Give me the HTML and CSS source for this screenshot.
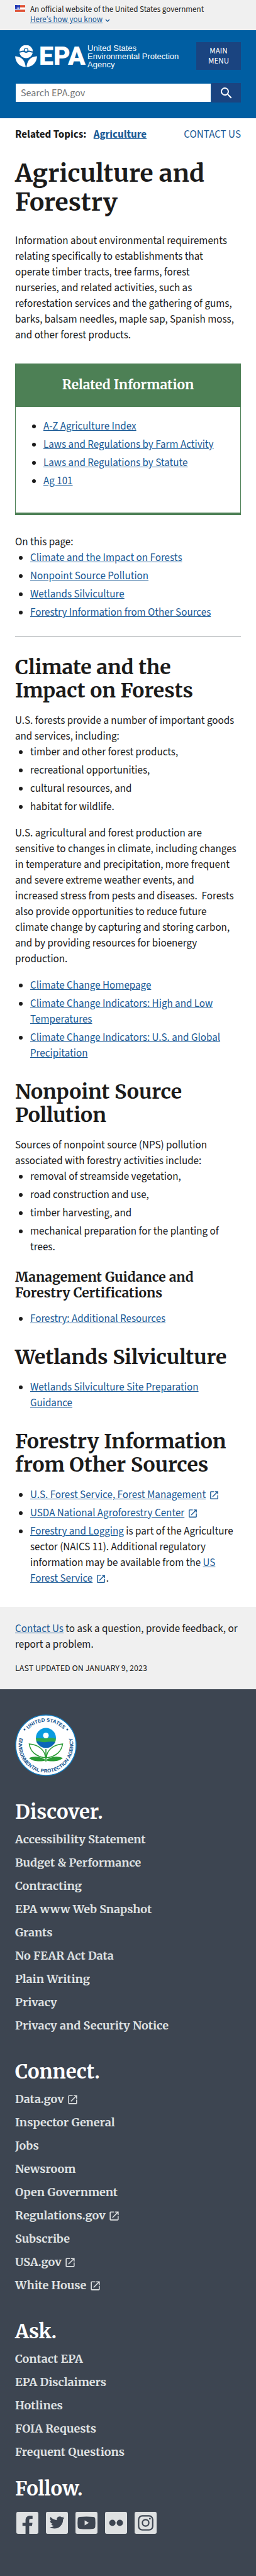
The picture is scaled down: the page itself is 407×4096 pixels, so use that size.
FILE: index.html
```html
<!DOCTYPE html>
<html lang="en">
<head>
<meta charset="utf-8">
<meta name="viewport" content="width=device-width, initial-scale=1">
<title>Agriculture and Forestry | US EPA</title>
<link rel="stylesheet" href="styles.css">
</head>
<body>
<svg class="defs" aria-hidden="true">
  <symbol id="launch" viewBox="0 0 24 24"><path d="M19 19H5V5h7V3H5a2 2 0 0 0-2 2v14a2 2 0 0 0 2 2h14c1.1 0 2-.9 2-2v-7h-2v7zM14 3v2h3.59l-9.83 9.83 1.41 1.41L19 6.41V10h2V3h-7z"/></symbol>
</svg>

<section class="banner">
  <svg class="flag" viewBox="0 0 16 11" aria-hidden="true">
    <path fill="#fff" d="M0 0h16v11H0z"/>
    <path stroke="#db3e1f" d="M0 .5h16M0 2.5h16M0 4.5h16M0 6.5h16M0 8.5h16M0 10.5h16"/>
    <path fill="#1e33b1" d="M0 0h8v7H0z"/>
    <path stroke="#fff" stroke-dasharray="1 1" d="M1 1.5h7M1 3.5h7M1 5.5h7" opacity=".75"/>
  </svg>
  <div>
    <p>An official website of the United States government</p>
    <a href="#how">Here’s how you know</a>
    <svg class="chevron" viewBox="0 0 8 5" aria-hidden="true"><path d="M1 1l3 3 3-3" fill="none" stroke="#1a5a96" stroke-width="1.4"/></svg>
  </div>
</section>

<header class="header">
  <div class="header-row">
    <a class="logo" href="#home">
      <svg class="logo-mark" viewBox="0 0 36 36" aria-hidden="true">
        <path d="M7 10A11 10.500 0 0 1 29 10c-2.500 0-3.500-1.300-6-1.300-.5 0-.9.100-1.300.2A3.800 3.800 0 1 0 14.300 8.900c-.4-.1-.8-.2-1.300-.2-2.500 0-3.500 1.300-6 1.300z"/>
        <circle cx="18" cy="7.800" r="2.300"/>
        <path d="M7.200 12.200c2.600 0 3.400-1.300 5.700-1.300s2.800 1.500 5.100 1.500 2.800-1.500 5.100-1.500 3.100 1.300 5.700 1.300C27.800 17.500 23.500 21 18 21S8.200 17.500 7.200 12.200z"/>
        <path d="M0 18c8 0 16 4.500 17.400 17.500C8 35.500 1 29 0 18zM36 18c-8 0-16 4.500-17.400 17.500C28 35.500 35 29 36 18z"/>
      </svg>
      <span class="logo-name">EPA</span>
      <span class="logo-full">United States<br>Environmental Protection<br>Agency</span>
    </a>
    <button class="menu-button" type="button">MAIN MENU</button>
  </div>
  <form class="search" role="search">
    <input type="search" aria-label="Search EPA.gov" placeholder="Search EPA.gov">
    <button type="button" aria-label="Search"><svg viewBox="0 0 24 24" aria-hidden="true"><path d="M15.500 14h-.79l-.28-.27A6.470 6.470 0 0 0 16 9.500 6.500 6.500 0 1 0 9.500 16c1.610 0 3.090-.59 4.230-1.570l.27.28v.79l5 4.990L20.490 19l-4.990-5zm-6 0C7.010 14 5 11.990 5 9.500S7.010 5 9.500 5 14 7.010 14 9.500 11.990 14 9.500 14z"/></svg></button>
  </form>
</header>

<main class="main">
  <div class="topics">
    <p><b>Related Topics:</b> <a href="#agriculture"><b>Agriculture</b></a></p>
    <a class="contact" href="#contact">CONTACT US</a>
  </div>

  <h1>Agriculture and Forestry</h1>
  <p class="intro">Information about environmental requirements relating specifically to establishments that operate timber tracts, tree farms, forest nurseries, and related activities, such as reforestation services and the gathering of gums, barks, balsam needles, maple sap, Spanish moss, and other forest products.</p>

  <aside class="box">
    <h2>Related Information</h2>
    <ul>
      <li><a href="#az">A-Z Agriculture Index</a></li>
      <li><a href="#activity">Laws and Regulations by Farm Activity</a></li>
      <li><a href="#statute">Laws and Regulations by Statute</a></li>
      <li><a href="#ag101">Ag 101</a></li>
    </ul>
  </aside>

  <nav class="toc">
    <p>On this page:</p>
    <ul>
      <li><a href="#climate">Climate and the Impact on Forests</a></li>
      <li><a href="#nonpoint">Nonpoint Source Pollution</a></li>
      <li><a href="#wetlands">Wetlands Silviculture</a></li>
      <li><a href="#other">Forestry Information from Other Sources</a></li>
    </ul>
  </nav>
  <hr>

  <h2 id="climate">Climate and the Impact on Forests</h2>
  <p>U.S. forests provide a number of important goods and services, including:</p>
  <ul>
    <li>timber and other forest products,</li>
    <li>recreational opportunities,</li>
    <li>cultural resources, and</li>
    <li>habitat for wildlife.</li>
  </ul>
  <p class="spaced">U.S. agricultural and forest production are sensitive to changes in climate, including changes in temperature and precipitation, more frequent and severe extreme weather events, and increased stress from pests and diseases.&nbsp; Forests also provide opportunities to reduce future climate change by capturing and storing carbon, and by providing resources for bioenergy production.</p>
  <ul class="spaced">
    <li><a href="#cc">Climate Change Homepage</a></li>
    <li><a href="#cci">Climate Change Indicators: High and Low Temperatures</a></li>
    <li><a href="#ccp">Climate Change Indicators: U.S. and Global Precipitation</a></li>
  </ul>

  <h2 id="nonpoint">Nonpoint Source Pollution</h2>
  <p>Sources of nonpoint source (NPS) pollution associated with forestry activities include:</p>
  <ul>
    <li>removal of streamside vegetation,</li>
    <li>road construction and use,</li>
    <li>timber harvesting, and</li>
    <li>mechanical preparation for the planting of trees.</li>
  </ul>
  <h3>Management Guidance and Forestry Certifications</h3>
  <ul>
    <li><a href="#resources">Forestry: Additional Resources</a></li>
  </ul>

  <h2 id="wetlands">Wetlands Silviculture</h2>
  <ul>
    <li><a href="#site">Wetlands Silviculture Site Preparation Guidance</a></li>
  </ul>

  <h2 id="other">Forestry Information from Other Sources</h2>
  <ul>
    <li><a href="#usfs">U.S. Forest Service, Forest Management</a> <svg class="ext"><use href="#launch"/></svg></li>
    <li><a href="#usda">USDA National Agroforestry Center</a> <svg class="ext"><use href="#launch"/></svg></li>
    <li><a href="#logging">Forestry and Logging</a> is part of the Agriculture sector (NAICS 11). Additional regulatory information may be available from the <a href="#fs">US Forest Service</a> <svg class="ext"><use href="#launch"/></svg>.</li>
  </ul>
</main>

<section class="feedback">
  <p><a href="#contact">Contact Us</a> to ask a question, provide feedback, or report a problem.</p>
  <p class="updated">LAST UPDATED ON JANUARY 9, 2023</p>
</section>

<footer class="footer">
  <svg class="seal" viewBox="0 0 98 98" role="img" aria-label="United States Environmental Protection Agency seal">
    <defs>
      <path id="arc-top" d="M11.500 49A37.500 37.500 0 0 1 86.500 49"/>
      <path id="arc-bottom" d="M18.240 18.240A43.500 43.500 0 1 0 79.760 18.240"/>
    </defs>
    <circle cx="49" cy="49" r="48" fill="#fff" stroke="#1179bd" stroke-width="1.500"/>
    <g class="seal-text" text-anchor="middle">
      <text><textPath href="#arc-top" startOffset="50%">UNITED STATES</textPath></text>
      <text><textPath href="#arc-bottom" startOffset="50%">ENVIRONMENTAL PROTECTION AGENCY</textPath></text>
    </g>
    <circle cx="15" cy="24" r="1.500" fill="#14558f"/>
    <circle cx="83" cy="24" r="1.500" fill="#14558f"/>
    <clipPath id="globe"><circle cx="49" cy="37.500" r="16"/></clipPath>
    <g clip-path="url(#globe)">
      <path fill="#0a9be0" d="M32 21h34v18H32z"/>
      <path fill="#2fa84b" d="M32 38c6-1 11 1 17 0s11-1 17 1v8H32z"/>
      <path fill="#0a66b8" d="M32 43c6-1 11 2 17 1s11-1 17 0v14H32z"/>
    </g>
    <circle cx="49" cy="33.500" r="4.500" fill="#fff"/>
    <path fill="none" stroke="#2a9b35" stroke-width="1.600" d="M49 55v20M48 69C32 67 24 58 22.500 47 36 48 48 56 48 69zM50 69c16-2 24-11 25.500-22C62 48 50 56 50 69z"/>
    <path fill="#2a9b35" d="M49 73c-8-7-20-7-27-3.500 7 6 20 6 27 3.500zM49 73c8-7 20-7 27-3.500-7 6-20 6-27 3.500z"/>
  </svg>

  <nav>
    <h2>Discover.</h2>
    <ul>
      <li><a href="#f1">Accessibility Statement</a></li>
      <li><a href="#f2">Budget &amp; Performance</a></li>
      <li><a href="#f3">Contracting</a></li>
      <li><a href="#f4">EPA www Web Snapshot</a></li>
      <li><a href="#f5">Grants</a></li>
      <li><a href="#f6">No FEAR Act Data</a></li>
      <li><a href="#f7">Plain Writing</a></li>
      <li><a href="#f8">Privacy</a></li>
      <li><a href="#f9">Privacy and Security Notice</a></li>
    </ul>
  </nav>
  <nav>
    <h2>Connect.</h2>
    <ul>
      <li><a href="#g1">Data.gov</a> <svg class="ext"><use href="#launch"/></svg></li>
      <li><a href="#g2">Inspector General</a></li>
      <li><a href="#g3">Jobs</a></li>
      <li><a href="#g4">Newsroom</a></li>
      <li><a href="#g5">Open Government</a></li>
      <li><a href="#g6">Regulations.gov</a> <svg class="ext"><use href="#launch"/></svg></li>
      <li><a href="#g7">Subscribe</a></li>
      <li><a href="#g8">USA.gov</a> <svg class="ext"><use href="#launch"/></svg></li>
      <li><a href="#g9">White House</a> <svg class="ext"><use href="#launch"/></svg></li>
    </ul>
  </nav>
  <nav>
    <h2>Ask.</h2>
    <ul>
      <li><a href="#h1">Contact EPA</a></li>
      <li><a href="#h2">EPA Disclaimers</a></li>
      <li><a href="#h3">Hotlines</a></li>
      <li><a href="#h4">FOIA Requests</a></li>
      <li><a href="#h5">Frequent Questions</a></li>
    </ul>
  </nav>
  <section class="follow">
    <h2>Follow.</h2>
    <div class="social">
      <a href="#facebook" aria-label="Facebook"><svg viewBox="0 0 36 36"><rect width="36" height="36" rx="2.500"/><path class="cut" d="M15 36V23h-5v-5h5v-4c0-5 3-7.500 7.200-7.500 1.700 0 3.300.100 4.300.2v4.600h-2.700c-2.300 0-2.800 1.200-2.800 2.900V18h5.300l-.7 5H21v13z"/></svg></a>
      <a href="#twitter" aria-label="Twitter"><svg viewBox="0 0 36 36"><rect width="36" height="36" rx="2.500"/><path class="cut" transform="translate(5.500 4.500)" d="M24.600 5.200a9.800 9.800 0 0 1-2.800.8 5 5 0 0 0 2.200-2.700 10 10 0 0 1-3.200 1.200 5 5 0 0 0-8.500 4.500C8.200 8.800 4.500 6.800 2.100 3.800a5 5 0 0 0 1.500 6.700 5 5 0 0 1-2.200-.6v.1a5 5 0 0 0 4 4.900 5 5 0 0 1-2.200.1 5 5 0 0 0 4.600 3.400A10 10 0 0 1 .5 20.500a14.100 14.100 0 0 0 7.700 2.300c9.200 0 14.300-7.700 14.300-14.300v-.7a10 10 0 0 0 2.100-2.600z"/></svg></a>
      <a href="#youtube" aria-label="YouTube"><svg viewBox="0 0 36 36"><rect width="36" height="36" rx="2.500"/><path class="cut" d="M7 8.300Q18 7 29 8.300q3 .3 3.300 3.200.6 6.500 0 13-.3 2.900-3.300 3.200-11 1.300-22 0-3-.3-3.300-3.200-.6-6.500 0-13Q4 8.600 7 8.300z"/><path d="M15 13.800v8.400l7-4.200z"/></svg></a>
      <a href="#flickr" aria-label="Flickr"><svg viewBox="0 0 36 36"><rect width="36" height="36" rx="2.500"/><circle class="cut" cx="12" cy="18" r="5.200"/><circle class="cut" cx="24.200" cy="18" r="5.200"/></svg></a>
      <a href="#instagram" aria-label="Instagram"><svg viewBox="0 0 36 36"><rect width="36" height="36" rx="2.500"/><g fill="none" stroke="#3d4551" stroke-width="2.200"><rect x="6.600" y="6.600" width="23" height="23" rx="6"/><circle cx="18" cy="18" r="5.300"/></g><circle class="cut" cx="25" cy="11.200" r="1.500"/></svg></a>
    </div>
  </section>
</footer>
</body>
</html>
```
FILE: styles.css
```css
* { box-sizing: border-box; }
body {
  margin: 0;
  background: #fff;
  color: #1b1b1b;
  font-family: "Source Sans 3", "Noto Sans CJK SC", sans-serif;
  font-size: 17px;
  line-height: 25px;
}
h1, h2, h3, p, ul { margin: 0; padding: 0; }
h1, h2, h3 { font-family: Merriweather, "Liberation Serif", serif; font-weight: 700; }
a { color: #1a5a96; }
.defs { display: none; }

.banner {
  display: flex;
  gap: 8px;
  padding: 7px 24px 9px;
  background: #f0f0f0;
  font-size: 13px;
  line-height: 16px;
}
.flag { width: 16px; height: 11px; margin-top: 1px; }
.chevron { width: 8px; height: 5px; margin-left: 1px; }

.header { padding: 19px 24px 25px; background: #005ea2; }
.header-row { display: flex; justify-content: space-between; align-items: center; }
.logo {
  display: flex;
  align-items: center;
  gap: 3px;
  color: #fff;
  text-decoration: none;
}
.logo-mark { width: 35px; height: 35px; fill: #fff; }
.logo-name { font: 900 41px/36px Roboto, sans-serif; }
.logo-full { font: 13px/13px "Liberation Sans", Arial, sans-serif; white-space: nowrap; }
.menu-button {
  width: 71px;
  padding: 6px 12px;
  border: 0;
  background: #1a4480;
  color: #fff;
  font: 13px/16px "Source Sans 3", "Noto Sans CJK SC", sans-serif;
}
.search { display: flex; margin-top: 21px; }
.search input {
  flex: 1;
  min-width: 0;
  height: 31px;
  padding: 0 8px;
  border: 1px solid #005ea2;
  background: #fff;
  font: 16px/25px "Source Sans 3", "Noto Sans CJK SC", sans-serif;
}
.search input::placeholder { color: #757575; opacity: 1; }
.search button { width: 47px; padding: 0; border: 0; background: #1a4480; }
.search svg { display: block; width: 24px; height: 24px; margin: 0 auto; fill: #fff; }

.main { padding: 14px 24px 32px; }
.topics { display: flex; justify-content: space-between; align-items: center; }
.topics p a { margin-left: 8px; }
.contact { text-decoration: none; }
h1 { margin: 26px 0; font-size: 39px; line-height: 46px; }
.main > p, .main > ul, .main > h2 { padding-right: 3px; }
.main > .intro { padding-right: 10px; }
.main > h2 { margin: 30px 0 17px; font-size: 32px; line-height: 37px; }
h3 { margin: 22px 0 17px; font-size: 21px; line-height: 25px; }
.main ul { padding-left: 24px; }
.main li + li { margin-top: 4px; }
.spaced { margin-top: 17px; }
hr { margin: 25px 0 0; border: 0; border-top: 1px solid #a9aeb1; }
.ext { width: 17px; height: 17px; margin-left: 1px; fill: #1a5a96; vertical-align: -4px; }

.box { margin: 32px 0 31px; border: 1px solid #4d8055; border-bottom-width: 4px; }
.box h2 {
  padding: 20px 16px 23px;
  background: #4d8055;
  color: #fff;
  font-size: 21px;
  line-height: 25px;
  text-align: center;
}
.main .box ul { padding: 19px 16px 37px 44px; }

.feedback { padding: 23px 24px 20px; background: #f0f0f0; }
.updated { margin-top: 13px; font-size: 14px; }

.footer { padding: 40px 24px 67px; background: #3d4551; }
.seal { display: block; width: 98px; height: 98px; margin-bottom: 38px; }
.seal-text { fill: #14558f; font: 700 8px "Liberation Sans", Arial, sans-serif; }
.footer h2 { margin-bottom: 13px; color: #fff; font-size: 31px; line-height: 37px; }
.footer nav + nav { margin-top: 42px; }
.footer ul { list-style: none; }
.footer li { font: 700 18px/25px Merriweather, "Liberation Serif", serif; }
.footer li + li { margin-top: 12px; }
.footer a { color: #dfe1e2; text-decoration: none; }
.footer .ext { width: 19px; height: 19px; margin-left: 0; fill: #dfe1e2; }
.follow { margin-top: 27px; }
.footer .follow h2 { margin-bottom: 19px; }
.social { display: flex; gap: 12px; padding-left: 2px; }
.social svg { display: block; width: 35px; height: 35px; fill: #dfe1e2; }
.social .cut { fill: #3d4551; }
```
